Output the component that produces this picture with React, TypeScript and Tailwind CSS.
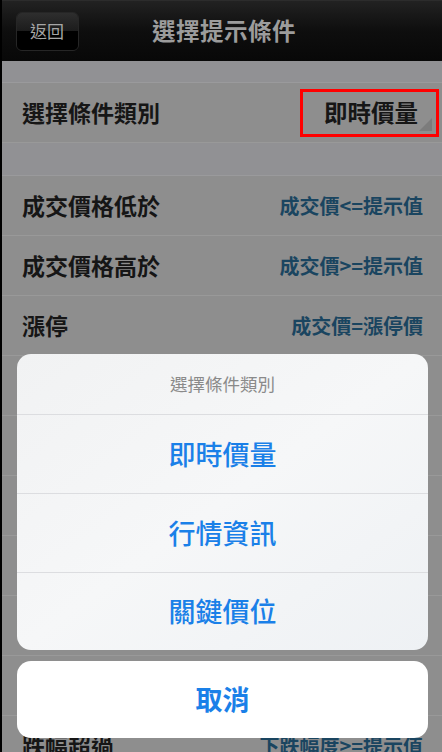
import React from 'react';

const rows = [
  { label: '成交價格低於', hint: '成交價<=提示值' },
  { label: '成交價格高於', hint: '成交價>=提示值' },
  { label: '漲停', hint: '成交價=漲停價' },
  { label: '跌停', hint: '成交價=跌停價' },
  { label: '買進價格低於', hint: '買進價<=提示值' },
  { label: '賣出價格高於', hint: '賣出價>=提示值' },
  { label: '單量超過', hint: '單量>=提示值' },
  { label: '總量超過', hint: '總量>=提示值' },
  { label: '漲幅超過', hint: '上漲幅度>=提示值' },
  { label: '跌幅超過', hint: '下跌幅度>=提示值' },
];

const options = ['即時價量', '行情資訊', '關鍵價位'];

export default function App() {
  return (
    <div className="relative w-[442px] h-[752px] overflow-hidden border-l-2 border-black bg-[#8e8e8e] font-['Noto_Sans_CJK_TC','Noto_Sans',sans-serif]">
      {/* nav bar */}
      <div className="relative h-[61px] flex items-center bg-gradient-to-b from-[#222] via-[#0e0e0e] to-[#080808] border-t border-[#2c2c2c]">
        <div className="ml-[14px] w-[63px] h-[39px] rounded-[6px] border border-[#262626] overflow-hidden flex flex-col">
          <div className="h-1/2 bg-gradient-to-b from-[#2e2e2e] to-[#1c1c1c]" />
          <div className="h-1/2 bg-black" />
        </div>
        <span className="absolute left-[28px] top-[20px] text-[17px] leading-[20px] text-[#a6a6a6]">返回</span>
        <h1 className="absolute left-[150px] top-[15px] text-[23.5px] leading-[28px] font-bold text-[#9c9c9c] tracking-[0.5px]">
          選擇提示條件
        </h1>
      </div>

      <div className="h-[22px] bg-[#919194] border-b border-[#9a9a9c]" />

      <div className="h-[60px] flex items-center justify-between pl-[20px] pr-[3px] border-b border-[#999]">
        <span className="text-[23px] font-bold text-[#161616]">選擇條件類別</span>
        <div className="relative w-[139px] h-[48px] border-[3px] border-[#ff0000] flex items-center justify-end pr-[18px]">
          <span className="text-[23.5px] font-bold text-[#161616]">即時價量</span>
          <svg className="absolute right-[4px] bottom-[3px]" width="13" height="13" viewBox="0 0 13 13">
            <polygon points="13,0 13,13 0,13" fill="#7c7c7c" />
          </svg>
        </div>
      </div>

      <div className="h-[33px] bg-[#919194] border-b border-[#9a9a9c]" />

      {rows.map((r) => (
        <div key={r.label} className="h-[60px] flex items-center justify-between pl-[20px] pr-[19px] border-b border-[#999]">
          <span className="text-[23px] font-bold text-[#161616]">{r.label}</span>
          <span className="text-[20px] font-bold text-[#1a4560]">{r.hint}</span>
        </div>
      ))}

      {/* action sheet */}
      <div className="absolute inset-0 flex flex-col justify-end pl-[15px] pr-[14px] pb-[14px] gap-[11px]">
        <div className="rounded-[14px] bg-gradient-to-br from-[#f1f2f3] via-[#f6f7f8] to-[#eef1f4] flex flex-col">
          <div className="h-[60px] flex items-center justify-center text-[17.5px] text-[#8a8a8a]">選擇條件類別</div>
          {options.map((o, i) => (
            <div
              key={o}
              className={`${i === 2 ? 'h-[78px]' : 'h-[79px]'} border-t border-[#dcdde0] flex items-center justify-center text-[27px] font-medium text-[#1a80e8]`}
            >
              {o}
            </div>
          ))}
        </div>
        <div className="h-[77px] rounded-[14px] bg-white flex items-center justify-center text-[27px] font-bold text-[#1a80e8]">
          取消
        </div>
      </div>
    </div>
  );
}
